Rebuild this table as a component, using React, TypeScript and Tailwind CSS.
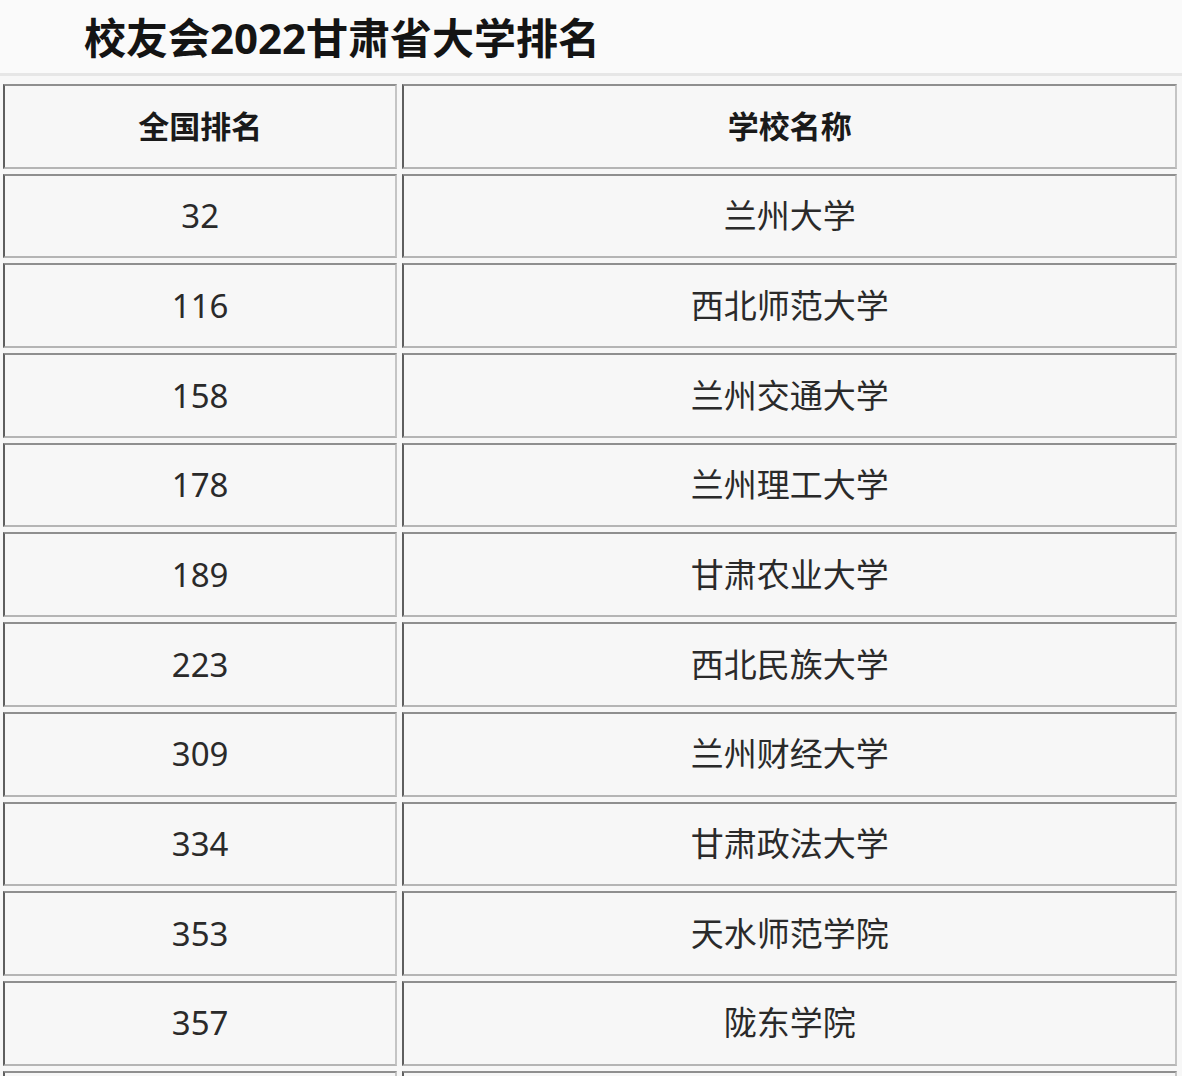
const rows: [string, string][] = [
  ["32", "兰州大学"],
  ["116", "西北师范大学"],
  ["158", "兰州交通大学"],
  ["178", "兰州理工大学"],
  ["189", "甘肃农业大学"],
  ["223", "西北民族大学"],
  ["309", "兰州财经大学"],
  ["334", "甘肃政法大学"],
  ["353", "天水师范学院"],
  ["357", "陇东学院"],
  ["", ""],
];

const cell =
  "h-[84.7px] border-2 border-t-[#8f8f8f] border-l-[#5f5f5f] border-r-[#c4c4c4] border-b-[#b5b5b5] bg-[#f7f7f7] text-center align-middle p-0";

export default function App() {
  return (
    <div
      className="min-h-screen overflow-hidden bg-[#f7f7f7] text-[#2a2a2a]"
      style={{ fontFamily: '"Noto Sans", "Noto Sans CJK SC", sans-serif' }}
    >
      <div className="h-[76px] bg-[#fafafa] pl-[84px] border-b-[3px] border-[#e6e6e6]">
        <h1 className="text-[42px] font-bold leading-[76px] text-[#141414]">
          校友会2022甘肃省大学排名
        </h1>
      </div>
      <table className="mt-[3px] -ml-[2px] border-separate border-spacing-[5px] table-fixed">
        <thead>
          <tr>
            <th className={`${cell} w-[395px] text-[31px] font-bold text-[#1a1a1a]`}>全国排名</th>
            <th className={`${cell} w-[776px] text-[31px] font-bold text-[#1a1a1a]`}>学校名称</th>
          </tr>
        </thead>
        <tbody>
          {rows.map(([rank, name], i) => (
            <tr key={i}>
              <td className={`${cell} text-[33px] font-normal`}>{rank}</td>
              <td className={`${cell} text-[33px] font-normal`}>{name}</td>
            </tr>
          ))}
        </tbody>
      </table>
    </div>
  );
}
